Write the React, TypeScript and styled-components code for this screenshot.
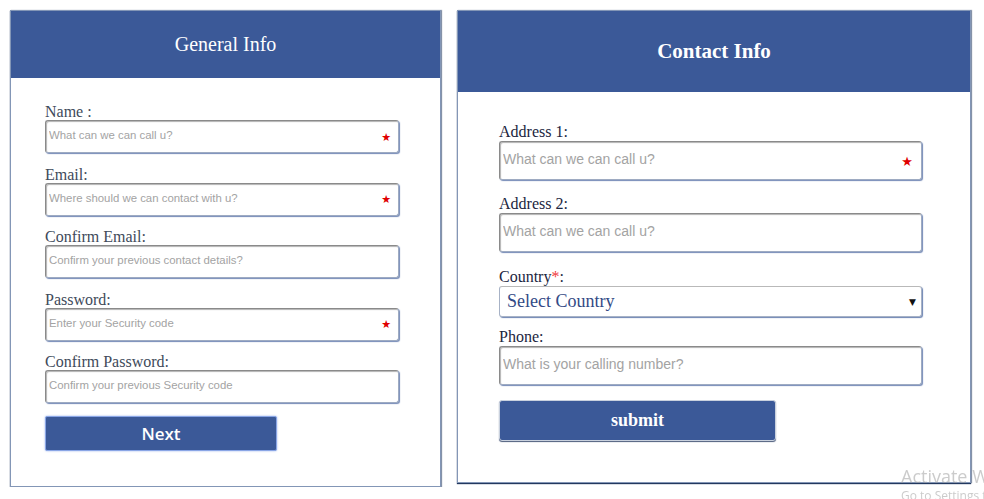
import styled, { createGlobalStyle } from "styled-components";

const GlobalStyle = createGlobalStyle`
  html, body {
    margin: 0;
    padding: 0;
    background: #ffffff;
    overflow: hidden;
  }
  body {
    font-family: "Liberation Serif", serif;
  }
`;

const Page = styled.div`
  display: flex;
  align-items: flex-start;
  gap: 16px;
  padding: 10px 0 0 10px;
`;

const Panel = styled.section<{ $width: number }>`
  width: ${(p) => p.$width}px;
  box-sizing: border-box;
  border: 1px solid #8396b6;
  box-shadow: 0 1px 1px #22385f, 1px 0 1px rgba(34, 56, 95, 0.45);
  background: #fff;
`;

const Header = styled.h2<{ $height: number; $size: number; $bold?: boolean }>`
  margin: 0;
  height: ${(p) => p.$height}px;
  background: #3b5998;
  color: #fff;
  display: flex;
  align-items: center;
  justify-content: center;
  font-family: "Liberation Serif", serif;
  font-size: ${(p) => p.$size}px;
  font-weight: ${(p) => (p.$bold ? 700 : 400)};
`;

const Body = styled.div<{ $pad: string }>`
  padding: ${(p) => p.$pad};
  display: flex;
  flex-direction: column;
  align-items: flex-start;
`;

const Field = styled.div<{ $after: number }>`
  display: flex;
  flex-direction: column;
  margin-bottom: ${(p) => p.$after}px;
`;

const Label = styled.label<{ $color: string; $lh: number }>`
  font-family: "Liberation Serif", serif;
  font-size: 16px;
  line-height: ${(p) => p.$lh}px;
  color: ${(p) => p.$color};
`;

const Req = styled.span`
  color: #f03a3a;
`;

const InputWrap = styled.div<{ $width: number }>`
  position: relative;
  width: ${(p) => p.$width}px;
`;

const TextInput = styled.input<{ $height: number; $size: number }>`
  box-sizing: border-box;
  width: 100%;
  height: ${(p) => p.$height}px;
  padding: 0 24px 3px 3px;
  border: 1px solid #9eabc2;
  border-top-color: #8a8a8a;
  border-left-color: #8a8a8a;
  border-radius: 3px;
  box-shadow: inset 1px 1px 1px rgba(0, 0, 0, 0.3),
    1px 1px 1px rgba(59, 89, 152, 0.7);
  font-family: "Liberation Sans", Arial, sans-serif;
  font-size: ${(p) => p.$size}px;
  color: #333;
  outline: none;
  background: #fff;

  &::placeholder {
    color: #a3a3a3;
  }
`;

const Star = styled.span<{ $size: number; $right: number }>`
  position: absolute;
  right: ${(p) => p.$right}px;
  top: 50%;
  transform: translateY(-50%);
  color: #e00000;
  font-family: "DejaVu Sans", sans-serif;
  font-size: ${(p) => p.$size}px;
  line-height: 1;
  pointer-events: none;
`;

const SelectBox = styled.select`
  box-sizing: border-box;
  width: 100%;
  height: 31px;
  padding: 0 20px 1px 7px;
  appearance: none;
  border: 1px solid #a7b2c6;
  border-top-color: #b9b9b9;
  border-radius: 3px;
  box-shadow: 1px 1px 1px rgba(59, 89, 152, 0.75);
  background: #fff;
  font-family: "Liberation Serif", serif;
  font-size: 18px;
  color: #334a86;
  outline: none;
`;

const Arrow = styled.span`
  position: absolute;
  right: 6px;
  top: 50%;
  transform: translateY(-50%);
  font-family: "DejaVu Sans", sans-serif;
  font-size: 9px;
  color: #111;
  pointer-events: none;
`;

const Button = styled.button<{ $variant: "next" | "submit" }>`
  box-sizing: border-box;
  background: #3b5998;
  color: #fff;
  cursor: pointer;
  ${(p) =>
    p.$variant === "next"
      ? `
    width: 232px;
    height: 35px;
    border: 1px solid #8aa6e6;
    border-radius: 2px;
    box-shadow: 0 0 2px rgba(120, 155, 230, 0.8);
    font-family: "Open Sans", "Noto Sans", sans-serif;
    font-size: 17px;
    font-weight: 600;
  `
      : `
    width: 277px;
    height: 41px;
    border: 1px solid #c9d1de;
    border-radius: 3px;
    box-shadow: 0 1px 1px #4d5d7c;
    font-family: "Liberation Serif", serif;
    font-size: 18px;
    font-weight: 700;
  `}
`;

const Watermark = styled.div`
  position: fixed;
  left: 901px;
  top: 464px;
  white-space: nowrap;
  font-family: "Open Sans", "Noto Sans", sans-serif;
  color: rgba(160, 160, 160, 0.55);
`;

const WatermarkTitle = styled.div`
  font-size: 18px;
  line-height: 24px;
`;

const WatermarkSub = styled.div`
  font-size: 12px;
  line-height: 16px;
`;

type GeneralField = { label: string; placeholder: string; required?: boolean };

const generalFields: GeneralField[] = [
  { label: "Name :", placeholder: "What can we can call u?", required: true },
  { label: "Email:", placeholder: "Where should we can contact with u?", required: true },
  { label: "Confirm Email:", placeholder: "Confirm your previous contact details?" },
  { label: "Password:", placeholder: "Enter your Security code", required: true },
  { label: "Confirm Password:", placeholder: "Confirm your previous Security code" },
];

const GeneralInfo = () => (
  <Panel $width={431}>
    <Header $height={67} $size={20}>
      General Info
    </Header>
    <Body $pad="25px 0 35px 34px">
      {generalFields.map((f) => (
        <Field key={f.label} $after={12.5}>
          <Label $color="#404a5a" $lh={17}>
            {f.label}
          </Label>
          <InputWrap $width={354}>
            <TextInput $height={33} $size={11.4} placeholder={f.placeholder} />
            {f.required && (
              <Star $size={11} $right={8}>
                ★
              </Star>
            )}
          </InputWrap>
        </Field>
      ))}
      <Button $variant="next">Next</Button>
    </Body>
  </Panel>
);

const ContactInfo = () => (
  <Panel $width={514}>
    <Header $height={81} $size={21} $bold>
      Contact Info
    </Header>
    <Body $pad="30px 0 41px 41px">
      <Field $after={14}>
        <Label $color="#1b2540" $lh={19}>
          Address 1:
        </Label>
        <InputWrap $width={423}>
          <TextInput $height={39} $size={14} placeholder="What can we can call u?" />
          <Star $size={13} $right={9}>
            ★
          </Star>
        </InputWrap>
      </Field>
      <Field $after={15}>
        <Label $color="#1b2540" $lh={19}>
          Address 2:
        </Label>
        <InputWrap $width={423}>
          <TextInput $height={39} $size={14} placeholder="What can we can call u?" />
        </InputWrap>
      </Field>
      <Field $after={10}>
        <Label $color="#1b2540" $lh={19}>
          Country<Req>*</Req>:
        </Label>
        <InputWrap $width={423}>
          <SelectBox defaultValue="">
            <option value="">Select Country</option>
          </SelectBox>
          <Arrow>▼</Arrow>
        </InputWrap>
      </Field>
      <Field $after={15}>
        <Label $color="#1b2540" $lh={19}>
          Phone:
        </Label>
        <InputWrap $width={423}>
          <TextInput $height={39} $size={14} placeholder="What is your calling number?" />
        </InputWrap>
      </Field>
      <Button $variant="submit">submit</Button>
    </Body>
  </Panel>
);

export default function App() {
  return (
    <>
      <GlobalStyle />
      <Page>
        <GeneralInfo />
        <ContactInfo />
      </Page>
      <Watermark>
        <WatermarkTitle>Activate Windows</WatermarkTitle>
        <WatermarkSub>Go to Settings to activate Windows.</WatermarkSub>
      </Watermark>
    </>
  );
}
